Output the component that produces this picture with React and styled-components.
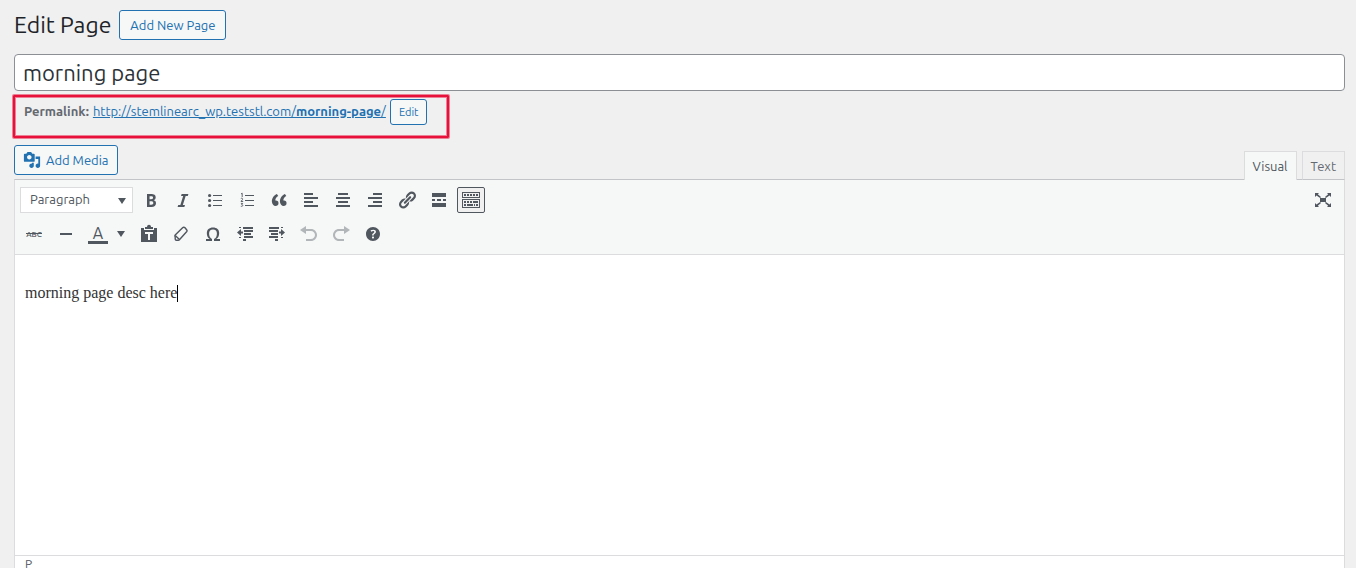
import React, { useState } from 'react';
import styled, { createGlobalStyle } from 'styled-components';

const GlobalStyle = createGlobalStyle`
  * {
    box-sizing: border-box;
  }

  body {
    margin: 0;
    background: #f0f0f1;
    color: #3c434a;
    font-family: Ubuntu, 'Noto Sans', sans-serif;
    font-size: 13px;
    overflow: hidden;
  }
`;

const Page = styled.main`
  display: flex;
  flex-direction: column;
  height: 100vh;
  padding: 10px 11px 0 14px;
`;

const Header = styled.header`
  display: flex;
  align-items: center;
  gap: 8px;
  height: 30px;
`;

const Heading = styled.h1`
  margin: 0;
  color: #1d2327;
  font-size: 23px;
  font-weight: 400;
  line-height: 30px;
`;

const Button = styled.button`
  display: inline-flex;
  align-items: center;
  justify-content: center;
  gap: 5px;
  height: ${props => (props.$small ? '26px' : '30px')};
  padding: ${props => (props.$small || props.$withIcon ? '0 8px' : '0 10px')};
  border: 1px solid #2271b1;
  border-radius: 3px;
  background: #f6f7f7;
  color: #2271b1;
  font-family: inherit;
  font-size: ${props => (props.$small ? '11px' : '13px')};
  white-space: nowrap;
  cursor: pointer;
`;

const TitleInput = styled.input`
  width: 100%;
  height: 37px;
  margin-top: 14px;
  padding: 0 8px;
  border: 1px solid #8c8f94;
  border-radius: 4px;
  background: #fff;
  color: #2c3338;
  font-family: inherit;
  font-size: 22px;
  flex-shrink: 0;
`;

const Permalink = styled.div`
  display: flex;
  align-items: flex-start;
  align-self: flex-start;
  gap: 4px;
  height: 43px;
  margin: 4px 0 0 -1px;
  padding: 2px 20px 0 9px;
  border: 2px solid #e8113c;
  border-radius: 1px;
  box-shadow: 0 0 0 1px rgba(232, 17, 60, 0.5), inset 0 0 0 1px rgba(232, 17, 60, 0.5);
  color: #646970;
  line-height: 24px;
  white-space: nowrap;

  a {
    color: #2271b1;
  }
`;

const MediaBar = styled.div`
  display: flex;
  align-items: flex-start;
  justify-content: space-between;
  margin-top: 7px;
`;

const Tabs = styled.div`
  display: flex;
  gap: 5px;
  margin-top: 6px;
`;

const Tab = styled.button`
  height: 29px;
  padding: 0 8px;
  border: 1px solid #dcdcde;
  border-bottom: ${props => (props.$active ? 'none' : '1px solid #c3c4c7')};
  background: ${props => (props.$active ? '#f6f7f7' : '#f0f0f1')};
  color: ${props => (props.$active ? '#50575e' : '#646970')};
  margin-bottom: -1px;
  position: relative;
  font-family: inherit;
  font-size: 13px;
  cursor: pointer;
`;

const Editor = styled.section`
  display: flex;
  flex-direction: column;
  flex: 1;
  border: 1px solid #dcdcde;
  border-top-color: #c3c4c7;
  border-bottom: none;
  background: #fff;
`;

const Toolbar = styled.div`
  display: flex;
  flex-direction: column;
  gap: 6px;
  padding: 6px 7px 6px 5px;
  border-bottom: 1px solid #dcdcde;
  background: #f6f7f7;
`;

const ToolRow = styled.div`
  display: flex;
  align-items: center;
  gap: 4px;
  height: 28px;
`;

const SelectBox = styled.div`
  display: grid;
  align-items: center;
  width: 113px;
  height: 26px;
  border: 1px solid #dcdcde;
  background: #fff;
  color: #50575e;

  select,
  svg {
    grid-area: 1 / 1;
  }

  select {
    width: 100%;
    height: 24px;
    padding: 0 9px 2px;
    border: none;
    background: transparent;
    color: inherit;
    font-family: inherit;
    font-size: 13px;
    appearance: none;
  }

  svg {
    justify-self: end;
    margin: 2px 6px 0 0;
    pointer-events: none;
  }
`;

const ToolButton = styled.button`
  display: inline-flex;
  align-items: center;
  justify-content: center;
  width: ${props => (props.$narrow ? '14px' : '28px')};
  height: 26px;
  padding: 0;
  border: 1px solid ${props => (props.$pressed ? '#50575e' : 'transparent')};
  border-radius: 2px;
  background: ${props => (props.$pressed ? '#f0f0f1' : 'transparent')};
  color: #50575e;
  opacity: ${props => (props.disabled ? 0.4 : 1)};
  cursor: pointer;

  svg {
    overflow: visible;
  }
`;

const SplitButton = styled.div`
  display: flex;
  align-items: center;
  gap: 2px;
  margin-right: 3px;
`;

const Spacer = styled.div`
  flex: 1;
`;

const Content = styled.div`
  flex: 1;
  padding: 26px 10px;
  color: #333;
  font-family: 'Liberation Serif', serif;
  font-size: 16px;
  line-height: 24px;
  outline: none;

  p {
    display: flex;
    align-items: center;
    margin: 0;
  }
`;

const Caret = styled.span`
  width: 1px;
  height: 17px;
  background: #000;
`;

const StatusBar = styled.footer`
  height: 13px;
  padding: 0 10px;
  border-top: 1px solid #dcdcde;
  color: #50575e;
  font-size: 12px;
  line-height: 16px;
`;

const shapes = {
  bold: <path d="M6 4v13h4.54c1.37 0 2.46-.33 3.26-1 .8-.66 1.2-1.58 1.2-2.77 0-.84-.17-1.51-.51-2.01s-.9-.85-1.67-1.03v-.09c.57-.1 1.02-.4 1.36-.9s.51-1.13.51-1.91c0-1.14-.39-1.98-1.17-2.5C12.75 4.26 11.5 4 9.78 4H6zm2.57 5.15V6.26h1.36c.73 0 1.27.11 1.61.32.34.22.51.58.51 1.07 0 .54-.16.92-.47 1.15s-.82.35-1.51.35h-1.5zm0 2.19h1.6c1.44 0 2.16.53 2.16 1.61 0 .6-.17 1.05-.51 1.34s-.86.43-1.57.43H8.57v-3.38z" />,
  italic: <path d="M14.78 6h-2.13l-2.8 9h2.12l-.62 2H4.6l.62-2h2.14l2.8-9H8.03l.62-2h6.75z" />,
  bullets: (
    <>
      <circle cx="4.6" cy="5.5" r="1.6" />
      <circle cx="4.6" cy="10.5" r="1.6" />
      <circle cx="4.6" cy="15.5" r="1.6" />
      <path d="M8 5h9v1H8zM8 10h9v1H8zM8 15h9v1H8z" />
    </>
  ),
  numbers: (
    <>
      <path d="M8 5h9v1H8zM8 10h9v1H8zM8 15h9v1H8z" />
      <path d="M4 4l1.2-.8V7M3.8 8.6c1-.8 2.2-.2 1.8.8L4 11.5h2.2M3.9 13.4h1.8l-1 1.3c1.8 0 1.4 2-.9 1.6" fill="none" stroke="currentColor" strokeWidth=".9" />
    </>
  ),
  quote: <path d="M9.49 13.22c0-.74-.2-1.38-.61-1.9-.62-.78-1.83-.88-2.53-.72-.29-1.65 1.11-3.75 2.92-4.65L7.88 4c-2.73 1.3-5.42 4.28-4.96 8.05C3.21 14.43 4.59 16 6.54 16c.85 0 1.56-.25 2.12-.75s.83-1.18.83-2.03zm8.05 0c0-.74-.2-1.38-.61-1.9-.63-.78-1.83-.88-2.53-.72-.29-1.65 1.11-3.75 2.92-4.65L15.93 4c-2.73 1.3-5.41 4.28-4.95 8.05.29 2.38 1.66 3.95 3.61 3.95.85 0 1.56-.25 2.12-.75s.83-1.18.83-2.03z" />,
  left: <path d="M3 3h9v2H3zM3 7h14v2H3zM3 11h9v2H3zM3 15h14v2H3z" />,
  center: <path d="M5 3h10v2H5zM3 7h14v2H3zM5 11h10v2H5zM3 15h14v2H3z" />,
  right: <path d="M8 3h9v2H8zM3 7h14v2H3zM8 11h9v2H8zM3 15h14v2H3z" />,
  link: <path d="M17.74 2.76c1.68 1.69 1.68 4.41 0 6.1l-1.53 1.52c-1.12 1.12-2.7 1.47-4.14 1.09l2.62-2.61.76-.77.76-.76c.84-.84.84-2.2 0-3.04-.84-.85-2.2-.85-3.04 0l-.77.76-3.38 3.38c-.37-1.44-.02-3.02 1.1-4.14l1.52-1.53c1.69-1.68 4.42-1.68 6.1 0zM8.59 13.43l5.34-5.34c.42-.42.42-1.1 0-1.52-.44-.43-1.13-.39-1.53 0l-5.33 5.34c-.42.42-.42 1.1 0 1.52.44.43 1.13.39 1.52 0zm-.76 2.29l4.14-4.15c.38 1.44.03 3.02-1.09 4.14l-1.52 1.53c-1.69 1.68-4.41 1.68-6.1 0-1.68-1.68-1.68-4.42 0-6.1l1.53-1.52c1.12-1.12 2.7-1.47 4.14-1.1l-4.14 4.15c-.85.84-.85 2.2 0 3.05.84.84 2.2.84 3.04 0z" />,
  more: <path d="M3 3h14v4H3zM3 9h3v2H3zM8 9h4v2H8zM14 9h3v2h-3zM3 13h14v4H3z" />,
  kitchen: <path fillRule="evenodd" d="M1 2h18v6H1zM2 3v4h16V3zM3 4h2v2H3zM6 4h2v2H6zM9 4h2v2H9zM12 4h2v2h-2zM15 4h2v2h-2zM1 9h18v9H1zM2 10v7h16v-7zM3 11h2v2H3zM6 11h2v2H6zM9 11h2v2H9zM12 11h5v2h-5zM3 14h2v2H3zM6 14h6v2H6zM13 14h1v2h-1zM15 14h2v2h-2z" />,
  expand: (
    <>
      <path d="M2 3h4L4.8 4.200 8 7l-.9 1L3.500 5.500 2 7zM18 3h-4l1.200 1.200L12 7l.9 1 3.600-2.500L18 7zM2 17h4l-1.200-1.200L8 13l-.9-1-3.600 2.500L2 13zM18 17h-4l1.200-1.200L12 13l.9-1 3.600 2.500L18 13z" />
      <path d="M7 8h6v4H7z" />
    </>
  ),
  strike: (
    <>
      <text x="10" y="13" textAnchor="middle" fontSize="8" fontWeight="500" fontFamily="Ubuntu, Noto Sans, sans-serif">ABC</text>
      <path d="M2 9h16v1H2z" />
    </>
  ),
  rule: <path d="M4 9h12v2H4z" />,
  color: (
    <>
      <text x="10" y="15" textAnchor="middle" fontSize="16" fontFamily="Ubuntu, Noto Sans, sans-serif">A</text>
      <path d="M0 17h20v3H0z" />
    </>
  ),
  paste: <path fillRule="evenodd" d="M2 4h3v2h10V4h3v14H2zM6 8v2h3v6h2v-6h3V8zM6 5V3h2c0-3 4-3 4 0h2v2z" />,
  erase: (
    <g fill="none" stroke="currentColor" strokeWidth="1.4" strokeLinejoin="round">
      <path d="M11.600 3.700L4.200 11c-.5.600-.5 1.300 0 1.800V15c0 .8.600 1.300 1.300 1.300h1.800c.5 0 .8-.1 1.100-.5l7.400-8.300c.4-.5.4-1 0-1.500L14 3.700c-.7-.7-1.700-.7-2.400 0z" />
      <path d="M4.200 11.500l4 3.800" />
    </g>
  ),
  omega: <path d="M10 5.400c1.270 0 2.240.360 2.910 1.080.660.710 1 1.760 1 3.130 0 1.280-.230 2.370-.690 3.270-.470.890-1.270 1.520-2.220 2.120v2h6v-2h-3.690c.920-.640 1.620-1.340 2.120-2.340.490-1.010.740-2.130.740-3.350 0-1.780-.550-3.190-1.650-4.220S11.920 3.540 10 3.540s-3.430.530-4.520 1.570c-1.100 1.040-1.650 2.440-1.650 4.200 0 1.210.240 2.310.730 3.330.480 1.010 1.190 1.710 2.100 2.360H3v2h6v-2c-.980-.640-1.800-1.280-2.240-2.170-.450-.890-.670-1.960-.670-3.220 0-1.370.330-2.410 1-3.130C7.750 5.760 8.720 5.400 10 5.400z" />,
  outdent: <path d="M4 3h2v1H4zM8 3h10v2H8zM9 6h9v2H9zM9 9h7v2H9zM9 12h9v2H9zM4 13h2v1H4zM8 15h3v2H8zM2 8.500L6 5v2.500h2v2H6V12z" />,
  indent: <path d="M14 3h2v1h-2zM2 3h10v2H2zM2 6h9v2H2zM4 9h7v2H4zM2 12h9v2H2zM14 13h2v1h-2zM8 15h3v2H8zM18 8.500L14 5v2.500h-2v2h2V12z" />,
  undo: <path d="M12 5H7V2L1 6l6 4V7h5c2.200 0 4 1.800 4 4s-1.800 4-4 4H7v2h5c3.300 0 6-2.700 6-6s-2.700-6-6-6z" />,
  redo: <path d="M8 5h5V2l6 4-6 4V7H8c-2.200 0-4 1.800-4 4s1.800 4 4 4h5v2H8c-3.300 0-6-2.700-6-6s2.700-6 6-6z" />,
  help: <path d="M17 10c0-3.870-3.140-7-7-7-3.870 0-7 3.130-7 7s3.130 7 7 7c3.860 0 7-3.130 7-7zm-6.300 1.480H9.140v-.430c0-.380.080-.700.240-.980s.460-.570.880-.890c.410-.290.680-.530.810-.710.140-.180.200-.390.200-.620 0-.250-.090-.440-.280-.580-.190-.130-.450-.190-.790-.190-.580 0-1.250.190-2 .570l-.640-1.280c.870-.490 1.800-.740 2.770-.740.810 0 1.450.200 1.920.580.480.390.710.910.710 1.550 0 .430-.090.800-.290 1.110-.190.320-.570.670-1.110 1.060-.380.280-.610.490-.710.630-.100.150-.150.340-.150.570v.350zm-1.470 2.740c-.180-.170-.270-.420-.270-.730 0-.330.080-.580.260-.750s.430-.250.770-.250c.320 0 .570.090.750.260s.270.420.270.740c0 .300-.090.550-.270.720-.180.180-.430.270-.750.270-.330 0-.580-.090-.760-.260z" />,
  media: <path d="M13 11V4c0-.55-.45-1-1-1h-1.670L9 1H5L3.670 3H2c-.55 0-1 .45-1 1v7c0 .55.45 1 1 1h10c.55 0 1-.45 1-1zM7 4.500c1.380 0 2.500 1.120 2.500 2.500S8.380 9.500 7 9.500 4.500 8.380 4.500 7 5.620 4.500 7 4.500zM14 6h5v10.500c0 1.380-1.120 2.500-2.500 2.500S14 17.880 14 16.500s1.120-2.500 2.500-2.500c.17 0 .34.020.5.050V9h-3V6zm-4 8.050V13h2v3.500c0 1.380-1.120 2.500-2.500 2.500S7 17.880 7 16.500 8.120 14 9.500 14c.17 0 .34.020.5.050z" />
};

const Icon = ({ name, size = 20 }) => (
  <svg width={size} height={size} viewBox="0 0 20 20" fill="currentColor" aria-hidden="true">
    {shapes[name]}
  </svg>
);

const Arrow = () => (
  <svg width="8" height="6" viewBox="0 0 8 6" fill="currentColor" aria-hidden="true">
    <path d="M0 0h8L4 6z" />
  </svg>
);

const firstRow = [
  { icon: 'bold', label: 'Bold' },
  { icon: 'italic', label: 'Italic' },
  { icon: 'bullets', label: 'Bulleted list' },
  { icon: 'numbers', label: 'Numbered list' },
  { icon: 'quote', label: 'Blockquote' },
  { icon: 'left', label: 'Align left' },
  { icon: 'center', label: 'Align center' },
  { icon: 'right', label: 'Align right' },
  { icon: 'link', label: 'Insert link' },
  { icon: 'more', label: 'Insert Read More tag' }
];

const secondRow = [
  { icon: 'paste', label: 'Paste as text' },
  { icon: 'erase', label: 'Clear formatting' },
  { icon: 'omega', label: 'Special character' },
  { icon: 'outdent', label: 'Decrease indent' },
  { icon: 'indent', label: 'Increase indent' },
  { icon: 'undo', label: 'Undo', disabled: true },
  { icon: 'redo', label: 'Redo', disabled: true },
  { icon: 'help', label: 'Keyboard Shortcuts' }
];

const Tool = ({ icon, label, ...rest }) => (
  <ToolButton type="button" aria-label={label} {...rest}>
    <Icon name={icon} />
  </ToolButton>
);

const App = () => {
  const [title, setTitle] = useState('morning page');
  const [tab, setTab] = useState('Visual');
  const [showSecond, setShowSecond] = useState(true);

  return (
    <>
      <GlobalStyle />
      <Page>
        <Header>
          <Heading>Edit Page</Heading>
          <Button type="button">Add New Page</Button>
        </Header>

        <TitleInput aria-label="Title" value={title} onChange={e => setTitle(e.target.value)} />

        <Permalink>
          <strong>Permalink:</strong>
          <a href="#morning-page">
            http://stemlinearc_wp.teststl.com/<b>morning-page</b>/
          </a>
          <Button type="button" $small>Edit</Button>
        </Permalink>

        <MediaBar>
          <Button type="button" $withIcon>
            <Icon name="media" size={18} />
            Add Media
          </Button>
          <Tabs>
            {['Visual', 'Text'].map(name => (
              <Tab key={name} type="button" $active={tab === name} onClick={() => setTab(name)}>
                {name}
              </Tab>
            ))}
          </Tabs>
        </MediaBar>

        <Editor>
          <Toolbar>
            <ToolRow>
              <SelectBox>
                <select aria-label="Format" defaultValue="Paragraph">
                  <option>Paragraph</option>
                </select>
                <Arrow />
              </SelectBox>
              {firstRow.map(tool => <Tool key={tool.icon} {...tool} />)}
              <Tool
                icon="kitchen"
                label="Toolbar Toggle"
                $pressed={showSecond}
                onClick={() => setShowSecond(!showSecond)}
              />
              <Spacer />
              <Tool icon="expand" label="Fullscreen" />
            </ToolRow>
            {showSecond && (
              <ToolRow>
                <Tool icon="strike" label="Strikethrough" />
                <Tool icon="rule" label="Horizontal line" />
                <SplitButton>
                  <Tool icon="color" label="Text color" />
                  <ToolButton type="button" aria-label="Choose text color" $narrow>
                    <Arrow />
                  </ToolButton>
                </SplitButton>
                {secondRow.map(tool => <Tool key={tool.icon} {...tool} />)}
              </ToolRow>
            )}
          </Toolbar>
          <Content>
            <p>morning page desc here<Caret /></p>
          </Content>
          <StatusBar>P</StatusBar>
        </Editor>
      </Page>
    </>
  );
};

export default App;
